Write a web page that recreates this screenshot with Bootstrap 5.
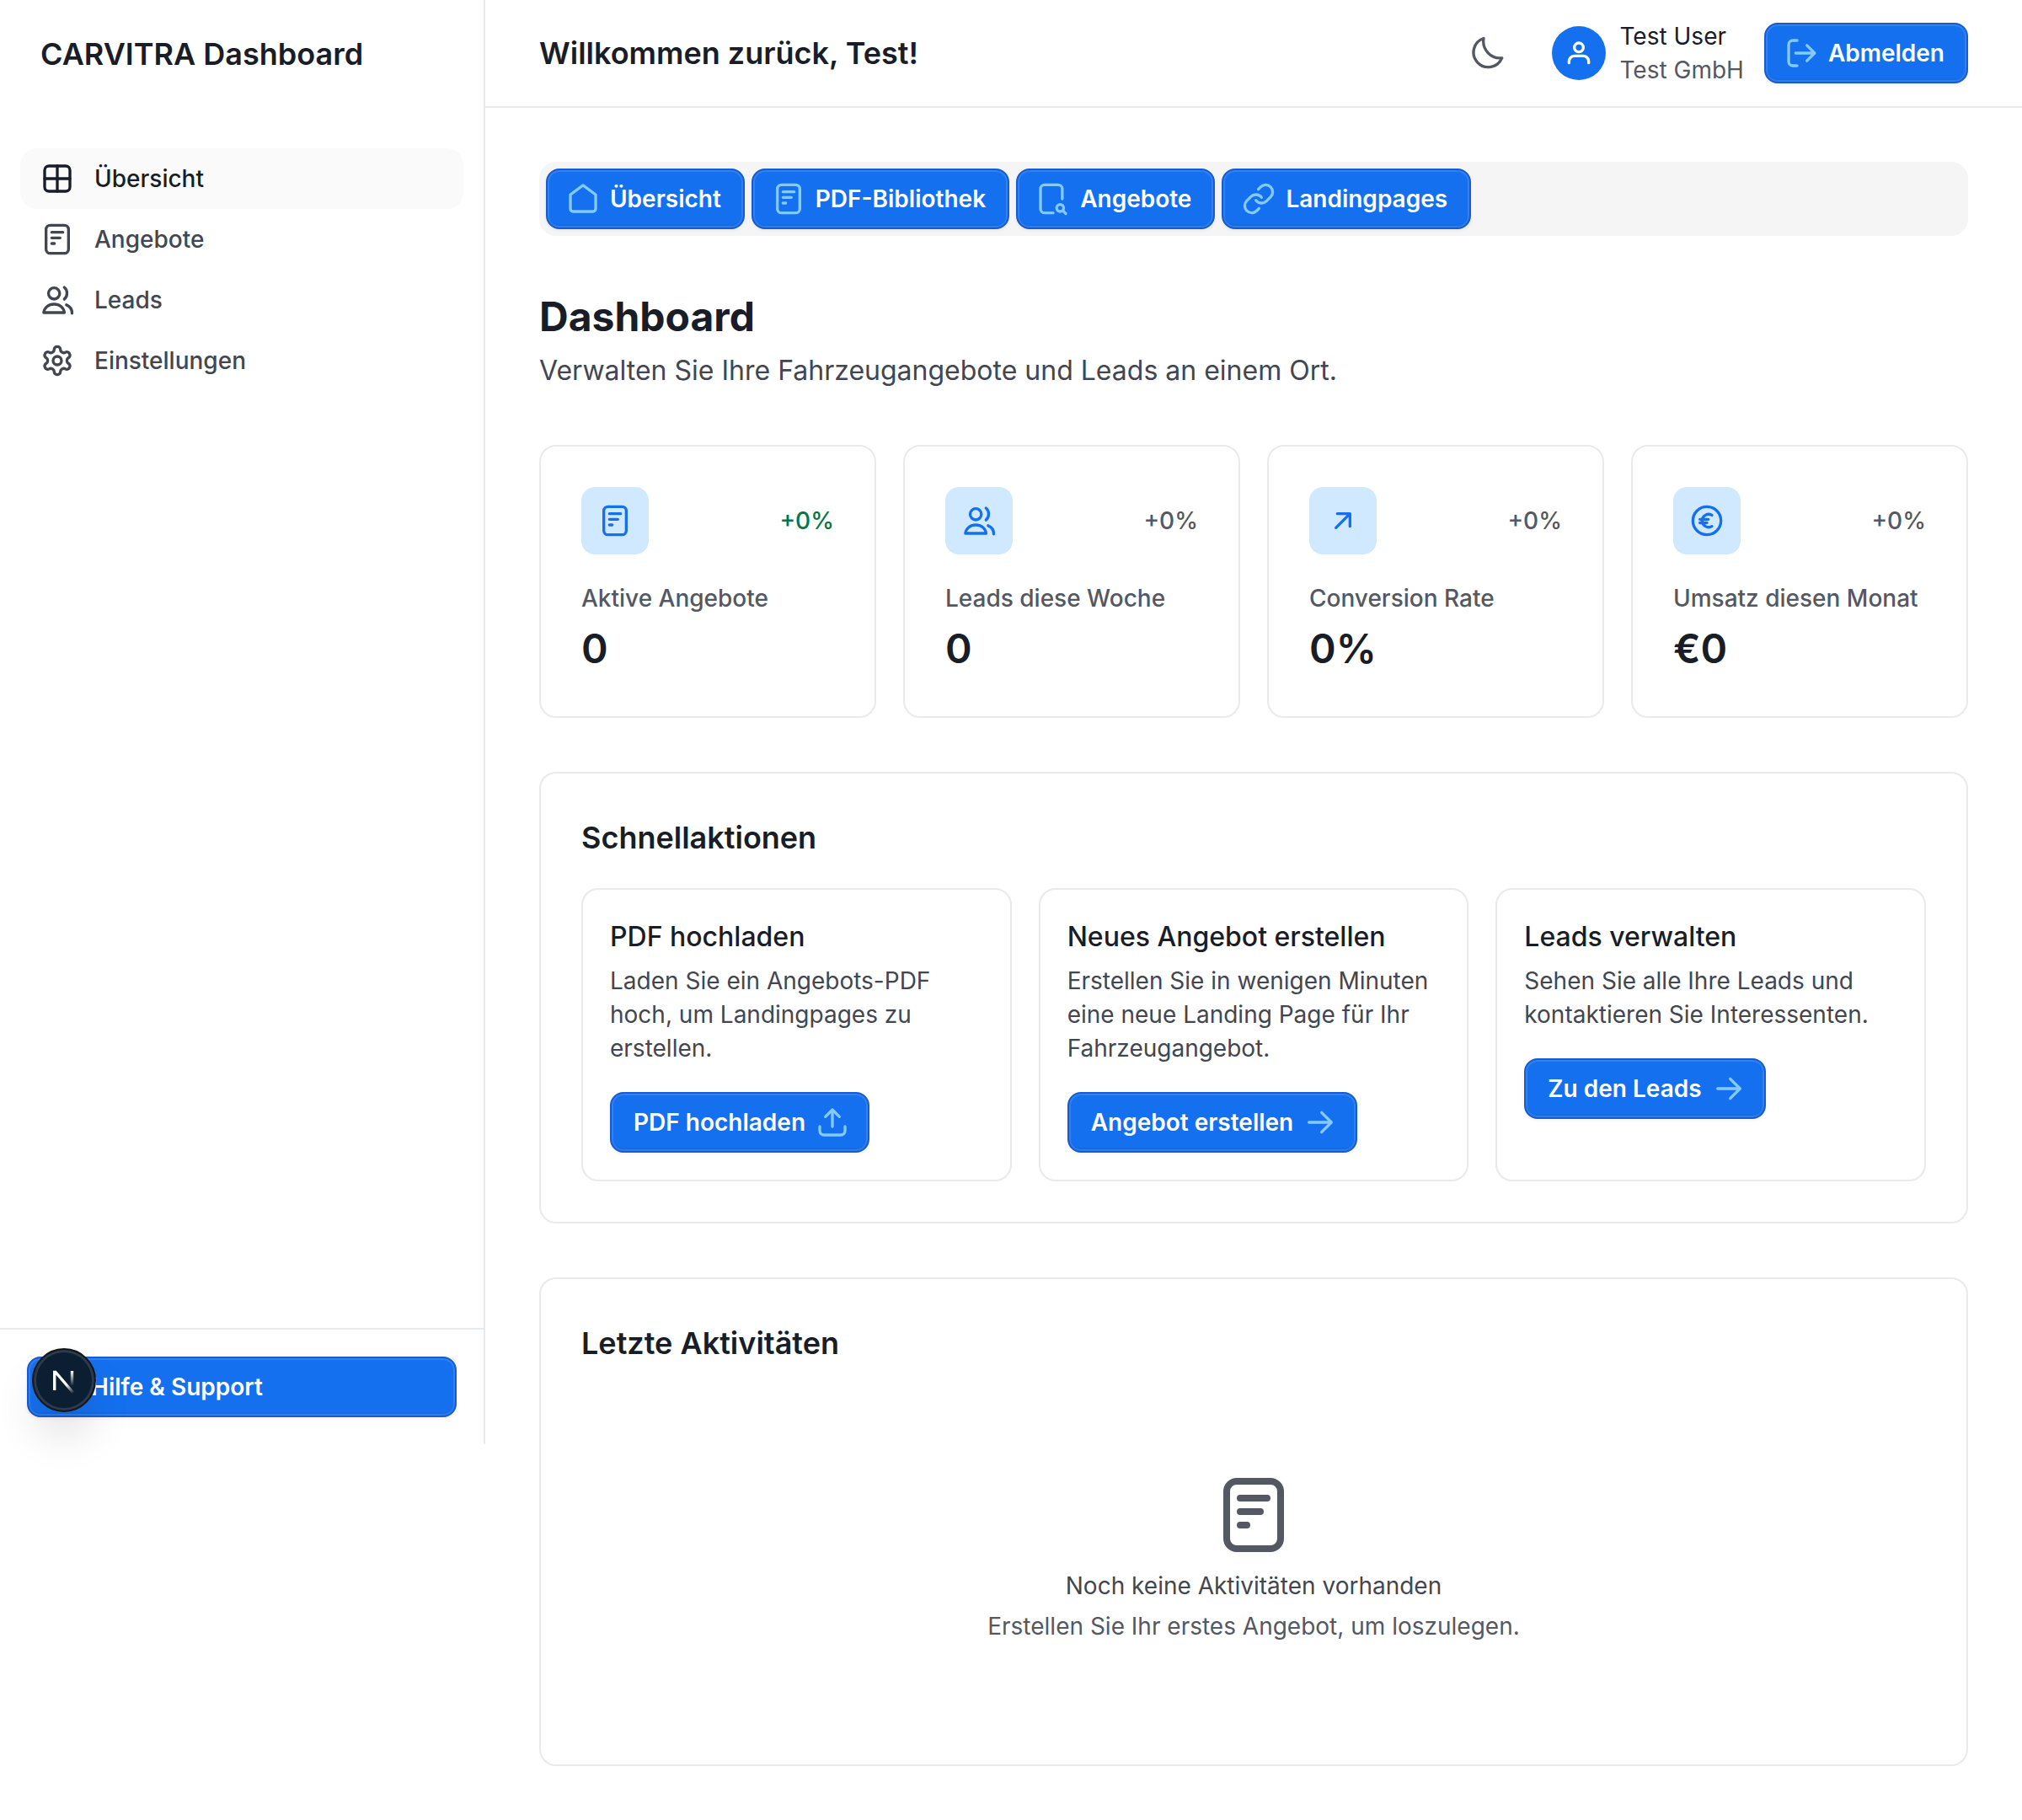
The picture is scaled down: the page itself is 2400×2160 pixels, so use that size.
<!DOCTYPE html>
<html lang="de">
<head>
    <meta charset="UTF-8">
    <meta name="viewport" content="width=device-width, initial-scale=1.0">
    <title>CARVITRA Dashboard</title>
    <link rel="stylesheet" href="https://cdn.jsdelivr.net/npm/bootstrap@5.3.0/dist/css/bootstrap.min.css">
    <style>
        :root {
            --bs-border-width: 2px;
            --bs-border-color: #e9eaeb;
        }
        body {
            font-family: Inter, "Liberation Sans", sans-serif;
            font-size: 28px;
            line-height: 40px;
            color: #181d27;
            background: #fff;
        }
        .ico { width: 40px; height: 40px; flex: none; fill: none; stroke: currentColor; stroke-width: 2; stroke-linecap: round; stroke-linejoin: round; }
        .side-panel { width: 576px; height: 1714px; flex: none; }
        .side-brand { height: 176px; padding: 44px 48px 0; }
        .side-brand h1, .top-title, .section-title { font-size: 36px; line-height: 56px; font-weight: 600; margin: 0; }
        .side-brand h1 { line-height: 40px; }
        .side-nav { padding: 0 24px; }
        .side-nav .nav-link { display: flex; align-items: center; gap: 24px; height: 72px; padding: 0 24px; border-radius: 20px; color: #414651; font-weight: 500; }
        .side-nav .nav-link.active { background: #fafafa; color: #181d27; }
        .side-foot { padding: 32px; }
        .brand-btn {
            --bs-btn-bg: #1570ef;
            --bs-btn-border-color: #175cd3;
            --bs-btn-color: #fff;
            --bs-btn-hover-bg: #1570ef;
            --bs-btn-hover-border-color: #175cd3;
            --bs-btn-padding-x: 26px;
            --bs-btn-padding-y: 14px;
            --bs-btn-font-size: 28px;
            --bs-btn-font-weight: 600;
            --bs-btn-line-height: 40px;
            --bs-btn-border-radius: 16px;
            display: inline-flex;
            align-items: center;
            gap: 12px;
            height: 72px;
            box-shadow: inset 0 0 0 2px rgba(255,255,255,.12), inset 0 -4px 0 rgba(10,13,18,.05), 0 2px 4px rgba(10,13,18,.05);
        }
        .brand-btn .ico { color: #84caff; }
        .brand-btn .ico-lead { margin-left: -4px; }
        .brand-btn .ico-trail { margin-right: -4px; }
        .help-btn { width: 510px; padding-left: 74px; }
        .top-bar { height: 128px; padding: 0 64px; }
        .user-pic { width: 64px; height: 64px; background: #1570ef; }
        .user-sub { color: #535862; }
        .moon-btn { color: #535862; margin-right: 56px; }
        .page-body { padding: 64px; }
        .tab-strip { background: #f5f5f5; border-radius: 20px; padding: 8px; margin-bottom: 64px; }
        .page-title { font-size: 48px; line-height: 64px; font-weight: 700; margin: 0 0 8px; }
        .page-sub { font-size: 32px; line-height: 48px; color: #414651; margin: 0 0 64px; }
        .stat-grid { display: grid; grid-template-columns: repeat(4, 400px); gap: 32px; margin-bottom: 64px; }
        .panel.card { --bs-card-border-color: #e9eaeb; --bs-card-border-radius: 20px; --bs-card-inner-border-radius: 18px; --bs-card-spacer-x: 48px; --bs-card-spacer-y: 48px; }
        .section-gap { margin-bottom: 64px; }
        .tile { width: 80px; height: 80px; border-radius: 16px; background: #d1e9ff; color: #1570ef; }
        .stat-change { color: #535862; font-weight: 500; }
        .stat-change.up { color: #067647; }
        .stat-label { color: #535862; font-weight: 500; margin: 32px 0 8px; }
        .stat-value { font-size: 48px; line-height: 64px; font-weight: 600; }
        .section-title { margin-bottom: 32px; }
        .action-grid { display: grid; grid-template-columns: repeat(3, 1fr); gap: 32px; }
        .action-card.card { --bs-card-border-color: #e9eaeb; --bs-card-spacer-x: 32px; --bs-card-spacer-y: 32px; --bs-card-border-radius: 20px; }
        .action-title { font-size: 32px; line-height: 48px; font-weight: 500; margin: 0 0 8px; }
        .action-text { color: #414651; margin: 0 0 32px; }
        .empty-box { padding: 96px 0 0; color: #414651; height: 392px; }
        .empty-box .ico { width: 96px; height: 96px; color: #535862; margin-bottom: 16px; }
        .empty-box p { margin: 0; }
        .empty-box p + p { margin-top: 8px; color: #535862; }
        .dev-badge { left: 38px; top: 1600px; width: 76px; height: 76px; background: #0c1e32; border: 2px solid #161616; box-shadow: inset 0 0 0 3px #2b3a4e, 0 32px 48px rgba(0,0,0,.1); z-index: 10; }
    </style>
</head>
<body>
    <svg class="d-none">
        <symbol id="i-grid" viewBox="0 0 24 24"><rect x="3" y="3" width="18" height="18" rx="3"/><path d="M3 12h18M12 3v18"/></symbol>
        <symbol id="i-doc" viewBox="0 0 24 24"><rect x="4" y="2" width="16" height="20" rx="3"/><path d="M8 7h8M8 11h6M8 15h2"/></symbol>
        <symbol id="i-users" viewBox="0 0 24 24"><circle cx="9.7" cy="7.4" r="4"/><path d="M2.3 21C2.8 17.5 5.8 15 9.7 15s6.9 2.5 7.4 6z"/><path d="M17 3c2.5 2 2.5 6.5 0 8.5M18.5 15.5c2.5 1 4 3.5 4 6"/></symbol>
        <symbol id="i-gear" viewBox="0 0 24 24"><path d="M12.22 2h-.44a2 2 0 0 0-2 2v.18a2 2 0 0 1-1 1.73l-.43.25a2 2 0 0 1-2 0l-.15-.08a2 2 0 0 0-2.73.73l-.22.38a2 2 0 0 0 .73 2.73l.15.1a2 2 0 0 1 1 1.72v.51a2 2 0 0 1-1 1.74l-.15.09a2 2 0 0 0-.73 2.73l.22.38a2 2 0 0 0 2.73.73l.15-.08a2 2 0 0 1 2 0l.43.25a2 2 0 0 1 1 1.73V20a2 2 0 0 0 2 2h.44a2 2 0 0 0 2-2v-.18a2 2 0 0 1 1-1.73l.43-.25a2 2 0 0 1 2 0l.15.08a2 2 0 0 0 2.73-.73l.22-.39a2 2 0 0 0-.73-2.73l-.15-.08a2 2 0 0 1-1-1.74v-.5a2 2 0 0 1 1-1.74l.15-.09a2 2 0 0 0 .73-2.73l-.22-.38a2 2 0 0 0-2.73-.73l-.15.08a2 2 0 0 1-2 0l-.43-.25a2 2 0 0 1-1-1.73V4a2 2 0 0 0-2-2z"/><circle cx="12" cy="12" r="3"/></symbol>
        <symbol id="i-home" viewBox="0 0 24 24"><path d="M12 2.3 21 9v10a2 2 0 0 1-2 2H5a2 2 0 0 1-2-2V9z"/></symbol>
        <symbol id="i-search-doc" viewBox="0 0 24 24"><path d="M18.5 12V5a3 3 0 0 0-3-3H6a3 3 0 0 0-3 3v14a3 3 0 0 0 3 3h6"/><circle cx="17" cy="18.5" r="2.5"/><path d="m19 20.5 2 2"/></symbol>
        <symbol id="i-link" viewBox="0 0 24 24"><path d="M10 13a5 5 0 0 0 7.54.54l3-3a5 5 0 0 0-7.07-7.07l-1.72 1.71"/><path d="M14 11a5 5 0 0 0-7.54-.54l-3 3a5 5 0 0 0 7.07 7.07l1.71-1.71"/></symbol>
        <symbol id="i-moon" viewBox="0 0 24 24"><path d="M9 1.5A10.5 10.5 0 1 0 22 15.5 12 12 0 0 1 9 1.5z"/></symbol>
        <symbol id="i-user" viewBox="0 0 24 24"><circle cx="12" cy="8" r="3.2"/><path d="M5 19v-1a4 4 0 0 1 4-4h6a4 4 0 0 1 4 4v1"/></symbol>
        <symbol id="i-logout" viewBox="0 0 24 24"><path d="M9 3H6a3 3 0 0 0-3 3v12a3 3 0 0 0 3 3h3"/><path d="M8 12h13M16 6.5l5.5 5.5-5.5 5.5"/></symbol>
        <symbol id="i-trend" viewBox="0 0 24 24"><path d="M7 17 17 7M8 7h9v9"/></symbol>
        <symbol id="i-euro" viewBox="0 0 24 24"><circle cx="12" cy="12" r="10"/><path d="M15.5 8a4.6 4.6 0 1 0 0 8M7 11h6M7 13.5h5"/></symbol>
        <symbol id="i-upload" viewBox="0 0 24 24"><path d="M12 15V3M7 8l5-5 5 5"/><path d="M3 15v3a3 3 0 0 0 3 3h12a3 3 0 0 0 3-3v-3"/></symbol>
        <symbol id="i-arrow" viewBox="0 0 24 24"><path d="M4 12h16M13 5l7 7-7 7"/></symbol>
    </svg>

    <div class="d-flex position-relative">
        <aside class="side-panel d-flex flex-column border-end">
            <div class="side-brand"><h1>CARVITRA Dashboard</h1></div>
            <nav class="side-nav nav flex-column">
                <a class="nav-link active" href="#"><svg class="ico"><use href="#i-grid"/></svg>Übersicht</a>
                <a class="nav-link" href="#"><svg class="ico"><use href="#i-doc"/></svg>Angebote</a>
                <a class="nav-link" href="#"><svg class="ico"><use href="#i-users"/></svg>Leads</a>
                <a class="nav-link" href="#"><svg class="ico"><use href="#i-gear"/></svg>Einstellungen</a>
            </nav>
            <div class="side-foot mt-auto border-top">
                <button class="btn brand-btn help-btn" type="button">Hilfe &amp; Support</button>
            </div>
        </aside>

        <div class="flex-grow-1">
            <header class="top-bar d-flex align-items-center border-bottom">
                <div class="top-title">Willkommen zurück, Test!</div>
                <svg class="ico moon-btn ms-auto"><use href="#i-moon"/></svg>
                <div class="user-pic rounded-circle d-flex align-items-center justify-content-center text-white"><svg class="ico"><use href="#i-user"/></svg></div>
                <div class="ms-3 me-4">
                    <div>Test User</div>
                    <div class="user-sub">Test GmbH</div>
                </div>
                <button class="btn brand-btn" type="button"><svg class="ico ico-lead"><use href="#i-logout"/></svg>Abmelden</button>
            </header>

            <main class="page-body">
                <div class="tab-strip d-flex gap-2">
                    <button class="btn brand-btn" type="button"><svg class="ico ico-lead"><use href="#i-home"/></svg>Übersicht</button>
                    <button class="btn brand-btn" type="button"><svg class="ico ico-lead"><use href="#i-doc"/></svg>PDF-Bibliothek</button>
                    <button class="btn brand-btn" type="button"><svg class="ico ico-lead"><use href="#i-search-doc"/></svg>Angebote</button>
                    <button class="btn brand-btn" type="button"><svg class="ico ico-lead"><use href="#i-link"/></svg>Landingpages</button>
                </div>

                <h2 class="page-title">Dashboard</h2>
                <p class="page-sub">Verwalten Sie Ihre Fahrzeugangebote und Leads an einem Ort.</p>

                <div class="stat-grid">
                    <div class="card panel"><div class="card-body">
                        <div class="d-flex justify-content-between align-items-center">
                            <div class="tile d-flex align-items-center justify-content-center"><svg class="ico"><use href="#i-doc"/></svg></div>
                            <span class="stat-change up">+0%</span>
                        </div>
                        <div class="stat-label">Aktive Angebote</div>
                        <div class="stat-value">0</div>
                    </div></div>
                    <div class="card panel"><div class="card-body">
                        <div class="d-flex justify-content-between align-items-center">
                            <div class="tile d-flex align-items-center justify-content-center"><svg class="ico"><use href="#i-users"/></svg></div>
                            <span class="stat-change">+0%</span>
                        </div>
                        <div class="stat-label">Leads diese Woche</div>
                        <div class="stat-value">0</div>
                    </div></div>
                    <div class="card panel"><div class="card-body">
                        <div class="d-flex justify-content-between align-items-center">
                            <div class="tile d-flex align-items-center justify-content-center"><svg class="ico"><use href="#i-trend"/></svg></div>
                            <span class="stat-change">+0%</span>
                        </div>
                        <div class="stat-label">Conversion Rate</div>
                        <div class="stat-value">0%</div>
                    </div></div>
                    <div class="card panel"><div class="card-body">
                        <div class="d-flex justify-content-between align-items-center">
                            <div class="tile d-flex align-items-center justify-content-center"><svg class="ico"><use href="#i-euro"/></svg></div>
                            <span class="stat-change">+0%</span>
                        </div>
                        <div class="stat-label">Umsatz diesen Monat</div>
                        <div class="stat-value">€0</div>
                    </div></div>
                </div>

                <section class="card panel section-gap">
                    <div class="card-body">
                        <h3 class="section-title">Schnellaktionen</h3>
                        <div class="action-grid">
                            <div class="card action-card"><div class="card-body">
                                <h4 class="action-title">PDF hochladen</h4>
                                <p class="action-text">Laden Sie ein Angebots-PDF hoch, um Landingpages zu erstellen.</p>
                                <button class="btn brand-btn" type="button">PDF hochladen<svg class="ico ico-trail"><use href="#i-upload"/></svg></button>
                            </div></div>
                            <div class="card action-card"><div class="card-body">
                                <h4 class="action-title">Neues Angebot erstellen</h4>
                                <p class="action-text">Erstellen Sie in wenigen Minuten eine neue Landing Page für Ihr Fahrzeugangebot.</p>
                                <button class="btn brand-btn" type="button">Angebot erstellen<svg class="ico ico-trail"><use href="#i-arrow"/></svg></button>
                            </div></div>
                            <div class="card action-card"><div class="card-body">
                                <h4 class="action-title">Leads verwalten</h4>
                                <p class="action-text">Sehen Sie alle Ihre Leads und kontaktieren Sie Interessenten.</p>
                                <button class="btn brand-btn" type="button">Zu den Leads<svg class="ico ico-trail"><use href="#i-arrow"/></svg></button>
                            </div></div>
                        </div>
                    </div>
                </section>

                <section class="card panel">
                    <div class="card-body">
                        <h3 class="section-title">Letzte Aktivitäten</h3>
                        <div class="empty-box text-center">
                            <svg class="ico"><use href="#i-doc"/></svg>
                            <p>Noch keine Aktivitäten vorhanden</p>
                            <p>Erstellen Sie Ihr erstes Angebot, um loszulegen.</p>
                        </div>
                    </div>
                </section>
            </main>
        </div>

        <div class="dev-badge position-absolute rounded-circle d-flex align-items-center justify-content-center">
            <svg width="36" height="36" viewBox="0 0 36 36" fill="none">
                <defs>
                    <linearGradient id="n-fade" x1="7" y1="7" x2="30" y2="33" gradientUnits="userSpaceOnUse">
                        <stop offset="0.6" stop-color="#fff"/><stop offset="1" stop-color="#fff" stop-opacity="0"/>
                    </linearGradient>
                    <linearGradient id="n-fade2" x1="27" y1="7" x2="27" y2="25" gradientUnits="userSpaceOnUse">
                        <stop stop-color="#fff"/><stop offset="1" stop-color="#fff" stop-opacity="0"/>
                    </linearGradient>
                </defs>
                <path d="M6.7 30V8.5h1.2L29 33" stroke="url(#n-fade)" stroke-width="3.4"/>
                <path d="M27.5 7v18" stroke="url(#n-fade2)" stroke-width="3.4"/>
            </svg>
        </div>
    </div>
    <script src="https://cdn.jsdelivr.net/npm/bootstrap@5.3.0/dist/js/bootstrap.bundle.min.js"></script>
</body>
</html>
